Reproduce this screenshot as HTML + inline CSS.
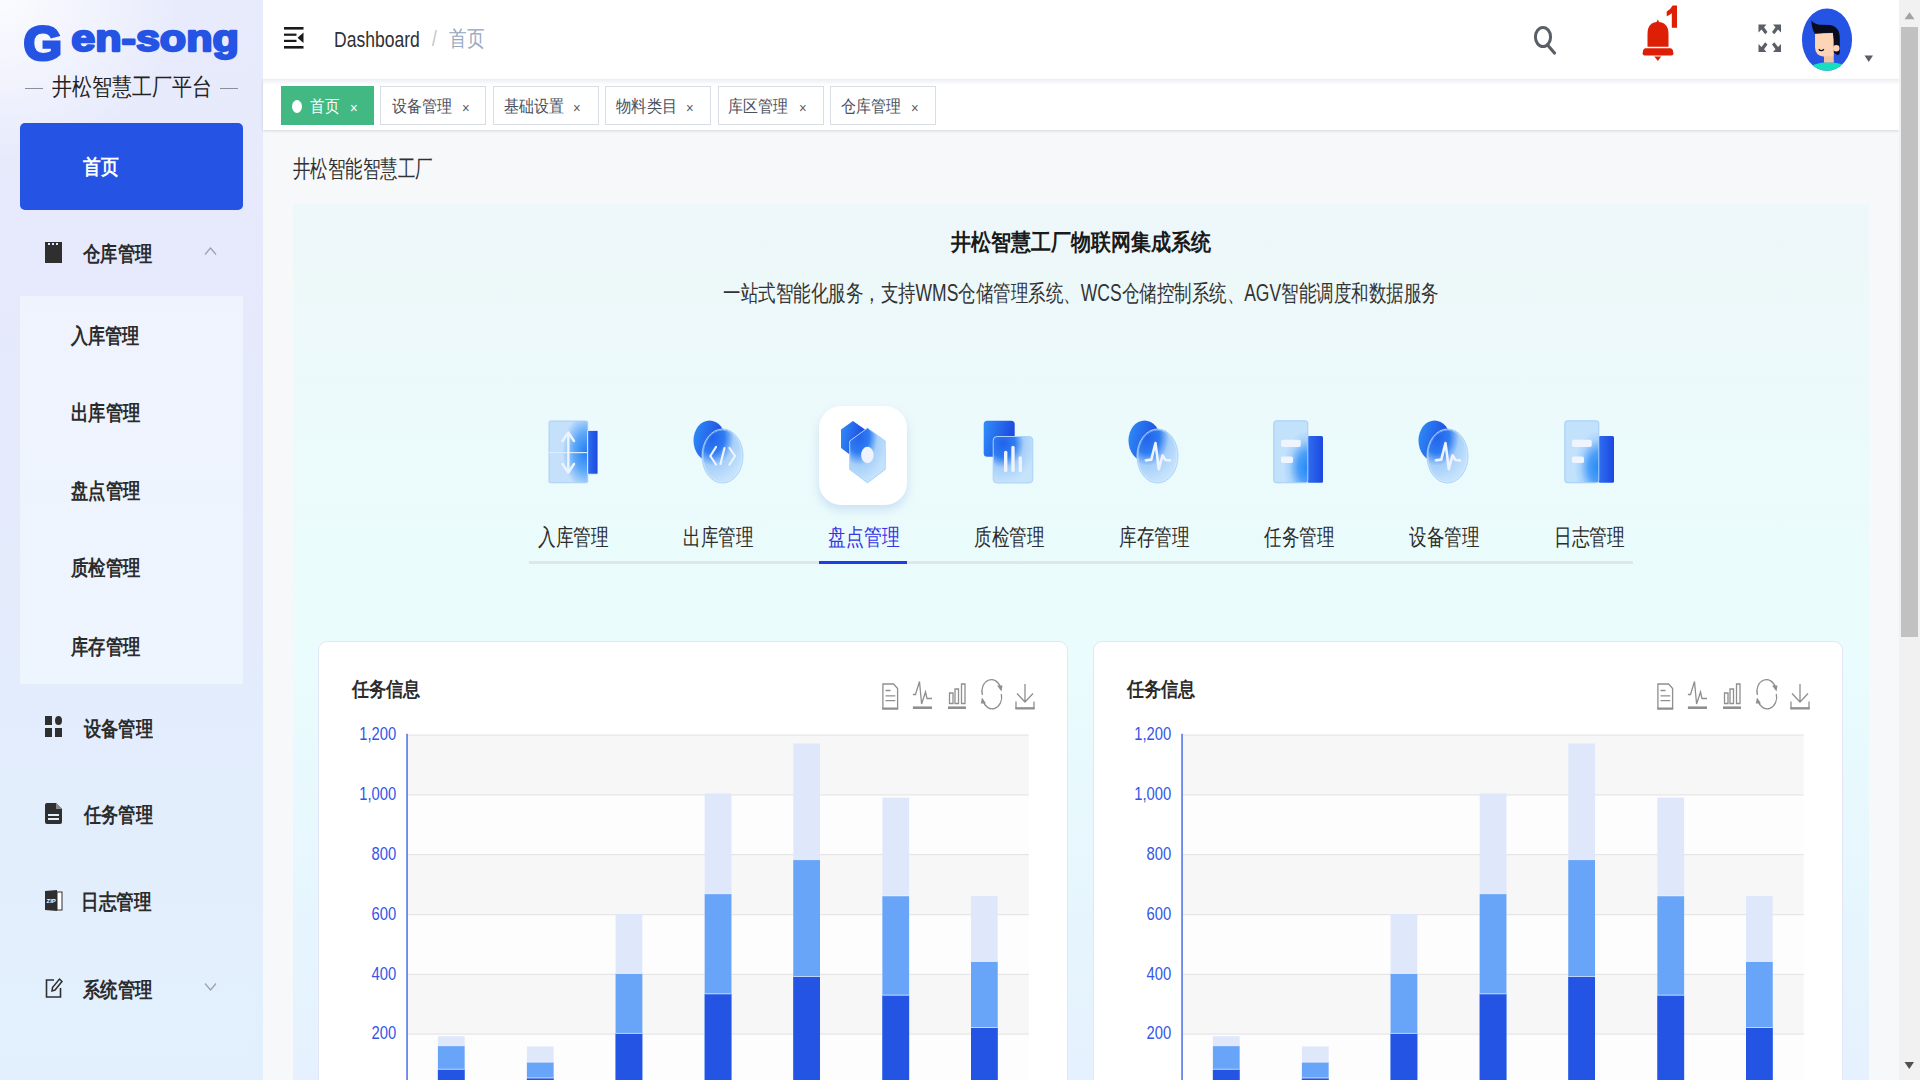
<!DOCTYPE html>
<html><head><meta charset="utf-8">
<style>
*{margin:0;padding:0;box-sizing:border-box}
html,body{width:1920px;height:1080px;overflow:hidden;background:#f7f8fa;font-family:"Liberation Sans",sans-serif;color:#303133}
.a{position:absolute}
.t{position:absolute;white-space:nowrap;transform-origin:0 0;line-height:1}
#side{left:0;top:0;width:263px;height:1080px;background:radial-gradient(ellipse 180px 160px at 0 0,rgba(255,255,255,.85),rgba(255,255,255,0)),linear-gradient(180deg,#e8ebfc 0%,#e5e9fb 30%,#e3ecfc 62%,#e2f0fd 100%)}
#sub{left:20px;top:296px;width:223px;height:388px;background:linear-gradient(180deg,#eff3fd,#edf5fe)}
.mi{font-size:22px;font-weight:bold;color:#2b2b2b}
.si{font-size:22px;font-weight:bold;color:#2b2b2b}
#hdr{left:263px;top:0;width:1636px;height:80px;background:#fff}
#tags{left:263px;top:80px;width:1636px;height:50px;background:#fff;box-shadow:0 1px 3px 0 rgba(0,0,0,.12),0 0 3px 0 rgba(0,0,0,.04)}
.tag{position:absolute;top:86px;height:39px;border:1px solid #d8dce5;background:#fff}
.tagt{font-size:18px;color:#495060}
.tagx{font-size:15.5px;color:#5a5e66}
#panel{left:293px;top:204px;width:1576px;height:876px;background:linear-gradient(180deg,#eef7f9 0%,#ebfbfc 35%,#eafcfd 52%,#e7f7fd 75%,#e5f1fe 100%)}
.card{position:absolute;top:640.8px;width:749.5px;height:460px;background:#fff;border:1px solid #e3e6f6;border-radius:9px}
.lbl{font-size:23px;color:#2a2a2a}
#sb{left:1899px;top:0;width:21px;height:1080px;background:#f1f1f1}
</style></head><body>

<!-- SIDEBAR -->
<div id="side" class="a">
  <svg class="a" style="left:0;top:0" width="263" height="110">
    <text x="23.5" y="60.3" font-family="Liberation Sans" font-weight="bold" font-size="48" fill="#2553e4" stroke="#2553e4" stroke-width="3" textLength="38.5" lengthAdjust="spacingAndGlyphs">G</text>
    <text x="71.3" y="51" font-family="Liberation Sans" font-weight="bold" font-size="37" fill="#2553e4" stroke="#2553e4" stroke-width="2.3" stroke-linejoin="round" textLength="167.5" lengthAdjust="spacingAndGlyphs">en-song</text>
    <rect x="25" y="88" width="18" height="1" fill="#8a8f9a"/>
    <rect x="220" y="88" width="18" height="1" fill="#8a8f9a"/>
  </svg>
  <div class="t" id="plat" style="left:52px;top:74.5px;font-size:24px;color:#222;transform:scaleX(0.834)">井松智慧工厂平台</div>

  <div class="a" style="left:20px;top:123px;width:223px;height:87px;background:#2553e4;border-radius:5px"></div>
  <div class="t mi" id="home" style="font-size:21px;left:83px;top:156.3px;color:#fff;transform:scaleX(0.846)">首页</div>

  <!-- 仓库管理 -->
  <svg class="a" style="left:45px;top:242px" width="18" height="22"><rect x="0" y="0" width="17" height="21" fill="#2f2f2f"/><rect x="3" y="1" width="2" height="2" fill="#e5e9fb"/><rect x="7" y="1" width="2" height="2" fill="#e5e9fb"/><rect x="11" y="1" width="2" height="2" fill="#e5e9fb"/></svg>
  <div class="t mi" id="m1" style="font-size:21px;left:83px;top:243px;transform:scaleX(0.822)">仓库管理</div>
  <svg class="a" style="left:204px;top:246px" width="14" height="10"><path d="M1 8.5 L6.5 2 L12 8.5" fill="none" stroke="#9aa0aa" stroke-width="1.2"/></svg>

  <div id="sub" class="a"></div>
  <div class="t si" id="s1" style="font-size:21px;left:71.4px;top:325.4px;transform:scaleX(0.817)">入库管理</div>
  <div class="t si" id="s2" style="font-size:21px;left:70.9px;top:401.8px;transform:scaleX(0.824)">出库管理</div>
  <div class="t si" id="s3" style="font-size:21px;left:70.7px;top:480px;transform:scaleX(0.823)">盘点管理</div>
  <div class="t si" id="s4" style="font-size:21px;left:70.6px;top:557.4px;transform:scaleX(0.826)">质检管理</div>
  <div class="t si" id="s5" style="font-size:21px;left:70.6px;top:635.6px;transform:scaleX(0.826)">库存管理</div>

  <!-- 设备管理 -->
  <svg class="a" style="left:45px;top:716px" width="18" height="22"><rect x="0" y="0" width="7" height="9" fill="#2f2f2f"/><ellipse cx="13.5" cy="4.5" rx="3.5" ry="4.5" fill="#2f2f2f"/><rect x="0" y="12" width="7" height="9" fill="#2f2f2f"/><rect x="10" y="12" width="7" height="9" fill="#2f2f2f"/></svg>
  <div class="t mi" id="m2" style="font-size:21px;left:83.6px;top:717.5px;transform:scaleX(0.821)">设备管理</div>

  <!-- 任务管理 -->
  <svg class="a" style="left:45px;top:803px" width="18" height="22"><path d="M0 2 Q0 0 2 0 L11 0 L17 6 L17 19 Q17 21 15 21 L2 21 Q0 21 0 19 Z" fill="#2f2f2f"/><rect x="3" y="11" width="11" height="2" fill="#e3eefc"/><rect x="3" y="15" width="11" height="2" fill="#e3eefc"/><path d="M11 0 L11 6 L17 6" fill="#8a8a8a"/></svg>
  <div class="t mi" id="m3" style="font-size:21px;left:83.6px;top:804px;transform:scaleX(0.821)">任务管理</div>

  <!-- 日志管理 -->
  <svg class="a" style="left:45px;top:890px" width="18" height="22"><path d="M0 1 L12 0 L12 21 L0 20 Z" fill="#2f2f2f"/><rect x="12" y="2" width="5" height="18" fill="#fff" stroke="#2f2f2f" stroke-width="1"/><text x="1.5" y="13" font-size="6" fill="#fff" font-family="Liberation Sans" font-weight="bold">ZIP</text></svg>
  <div class="t mi" id="m4" style="font-size:21px;left:81.4px;top:891.4px;transform:scaleX(0.836)">日志管理</div>

  <!-- 系统管理 -->
  <svg class="a" style="left:45px;top:977px" width="18" height="22"><path d="M9 3 L1.5 3 L1.5 20 L15.5 20 L15.5 11" fill="none" stroke="#2f2f2f" stroke-width="1.6"/><path d="M7 14 L7.5 10.5 L14.5 2 L17 4.5 L10 13 Z" fill="none" stroke="#2f2f2f" stroke-width="1.5"/></svg>
  <div class="t mi" id="m5" style="font-size:21px;left:83px;top:978.6px;transform:scaleX(0.828)">系统管理</div>
  <svg class="a" style="left:204px;top:982px" width="14" height="10"><path d="M1 1.5 L6.5 8 L12 1.5" fill="none" stroke="#9aa0aa" stroke-width="1.2"/></svg>
</div>

<!-- HEADER -->
<div id="hdr" class="a"></div>
<svg class="a" style="left:283px;top:26px" width="22" height="24"><rect x="1" y="1" width="19.5" height="2.6" fill="#1a1a1a"/><rect x="1" y="7.6" width="12.5" height="2.2" fill="#1a1a1a"/><rect x="1" y="13.8" width="12.5" height="2.2" fill="#1a1a1a"/><path d="M20.5 6.5 L14.5 11.8 L20.5 17 Z" fill="#1a1a1a"/><rect x="1" y="20" width="19.5" height="2.6" fill="#1a1a1a"/></svg>
<div class="t" id="bc1" style="left:334.2px;top:29px;font-size:22px;color:#303133;transform:scaleX(0.797)">Dashboard</div>
<div class="t" id="bc2" style="left:431.7px;top:28px;font-size:22px;color:#c0c4cc;transform:scaleX(.78)">/</div>
<div class="t" id="bc3" style="left:448.8px;top:28.2px;font-size:22px;color:#97a8be;transform:scaleX(0.803)">首页</div>
<svg class="a" style="left:1530px;top:22px" width="30" height="34"><ellipse cx="13" cy="15" rx="7.6" ry="9.6" fill="none" stroke="#5a5e66" stroke-width="3"/><path d="M17.5 23 L24.5 31" stroke="#5a5e66" stroke-width="3.2" stroke-linecap="round"/></svg>
<svg class="a" style="left:1640px;top:0px" width="42" height="64"><g fill="#dd1f05"><path d="M17.8 19.5 L19.6 23 L16 23 Z"/><path d="M7.5 46.8 L7.5 34 Q7.5 22.3 17.8 22 Q28.5 22.3 28.5 34 L28.5 46.8 Z"/><path d="M5.5 48.2 L30.5 48.2 Q32 48.2 32.8 50 L33.4 53.5 Q33.4 55.6 31.4 55.6 L4.6 55.6 Q2.6 55.6 2.6 53.5 L3.2 50 Q4 48.2 5.5 48.2 Z"/><path d="M14.4 56.6 L21.2 56.6 L17.8 61 Z"/></g><path d="M37 5.6 L37 27.7 L31.8 27.7 L31.8 13.2 Q29.3 15.4 26.7 16.3 L26.7 11.6 Q30.5 9.9 32.6 5.6 Z" fill="#dd1f05"/></svg>
<svg class="a" style="left:1757px;top:23px" width="26" height="31"><g fill="#5a5e66"><path d="M1.5 1.5 L9.5 1.5 L7 4.2 L10.5 9 L8.2 11.3 L4.5 6.6 L1.5 9.5 Z"/><path d="M24 1.5 L16 1.5 L18.5 4.2 L15 9 L17.3 11.3 L21 6.6 L24 9.5 Z"/><path d="M1.5 29 L9.5 29 L7 26.3 L10.5 21.5 L8.2 19.2 L4.5 23.9 L1.5 21 Z"/><path d="M24 29 L16 29 L18.5 26.3 L15 21.5 L17.3 19.2 L21 23.9 L24 21 Z"/></g></svg>
<svg class="a" style="left:1800px;top:7px" width="55" height="66">
 <defs><clipPath id="avc"><ellipse cx="27" cy="32.6" rx="25.05" ry="31.2"/></clipPath></defs>
 <ellipse cx="27" cy="32.6" rx="25.05" ry="31.2" fill="#2553e4"/>
 <g clip-path="url(#avc)">
  <path d="M6 64 Q12 55.5 27 55.2 Q41 55.2 47 60 L47 75 L6 75 Z" fill="#16dfbd"/>
  <rect x="24" y="46" width="9.75" height="9.5" fill="#f5c1a5"/>
  <path d="M15 26.5 L33.5 26 L34 45 L33 49.25 L23 49.5 Q15.2 48.5 15 40 Z" fill="#fdd5b6"/>
  <path d="M11.25 13.6 Q14 17 19.7 17.8 L30 18.1 Q36 19 38.6 24 Q40 28 39.8 32 L39.8 45.5 Q39.5 48.2 37.2 48 L33.75 45.5 L33.75 32.4 L32.8 25.8 Q24 26 15 26.75 Q12.2 24 11.25 13.6 Z" fill="#080c1c"/>
  <circle cx="36.3" cy="41.3" r="3.2" fill="#fdd5b6"/>
  <path d="M18.8 42.2 Q21.3 45 23.9 42.2" fill="none" stroke="#080c1c" stroke-width="1.4"/>
 </g>
</svg>
<svg class="a" style="left:1863px;top:54px" width="12" height="10"><path d="M1.5 1.5 L10 1.5 L5.75 8 Z" fill="#5a5e66"/></svg>

<div id="tags" class="a"></div>
<div class="a" style="left:263px;top:79px;width:1636px;height:6px;background:linear-gradient(180deg,#eceef2,rgba(255,255,255,0))"></div>
<div class="a" style="left:281px;top:86px;width:93px;height:39px;background:#42b983"></div>
<div class="a" style="left:292px;top:100px;width:10px;height:13px;border-radius:50%;background:#fff"></div>
<div class="t tagt" id="tg1" style="font-size:17px;left:309.5px;top:98px;color:#fff;transform:scaleX(0.853)">首页</div>
<div class="t tagx" id="tx1" style="font-size:15.5px;left:350.1px;top:99.6px;color:#fff;transform:scaleX(0.843)">×</div>
<div class="tag" style="left:380.3px;width:106px"></div>
<div class="t tagt" id="tg2" style="font-size:17px;left:391.6px;top:97.5px;transform:scaleX(0.884)">设备管理</div>
<div class="t tagx" id="tx2" style="font-size:15.5px;left:461.9px;top:99.6px;transform:scaleX(0.843)">×</div>
<div class="tag" style="left:493.0px;width:106px"></div>
<div class="t tagt" id="tg3" style="font-size:17px;left:503.9px;top:97.5px;transform:scaleX(0.881)">基础设置</div>
<div class="t tagx" id="tx3" style="font-size:15.5px;left:572.7px;top:99.6px;transform:scaleX(0.843)">×</div>
<div class="tag" style="left:605.4px;width:106px"></div>
<div class="t tagt" id="tg4" style="font-size:17px;left:615.9px;top:98.2px;transform:scaleX(0.901)">物料类目</div>
<div class="t tagx" id="tx4" style="font-size:15.5px;left:686px;top:99.6px;transform:scaleX(0.843)">×</div>
<div class="tag" style="left:718.4px;width:106px"></div>
<div class="t tagt" id="tg5" style="font-size:17px;left:728.4px;top:98.2px;transform:scaleX(0.878)">库区管理</div>
<div class="t tagx" id="tx5" style="font-size:15.5px;left:798.9px;top:99.6px;transform:scaleX(0.843)">×</div>
<div class="tag" style="left:830.4px;width:106px"></div>
<div class="t tagt" id="tg6" style="font-size:17px;left:840.9px;top:98.2px;transform:scaleX(0.878)">仓库管理</div>
<div class="t tagx" id="tx6" style="font-size:15.5px;left:911px;top:99.6px;transform:scaleX(0.843)">×</div>

<div class="t" id="hd" style="left:293px;top:156.6px;font-size:24px;color:#303133;transform:scaleX(0.728)">井松智能智慧工厂</div>
<div id="panel" class="a"></div>
<svg width="0" height="0" style="position:absolute">
 <defs>
  <linearGradient id="gDark" x1="0" y1="0" x2="1" y2="0.3"><stop offset="0" stop-color="#2f8ff9"/><stop offset="1" stop-color="#1e48df"/></linearGradient>
  <linearGradient id="gDark2" x1="0" y1="0" x2="1" y2="0"><stop offset="0" stop-color="#2d6ff0"/><stop offset="1" stop-color="#1d47df"/></linearGradient>
  <radialGradient id="gGlass" cx="0.25" cy="0.15" r="0.85"><stop offset="0" stop-color="#2263ea"/><stop offset="0.35" stop-color="#2f7cf2"/><stop offset="0.62" stop-color="#a6cff9"/><stop offset="1" stop-color="#c6e3fc"/></radialGradient>
  <radialGradient id="gPanelA" cx="0.95" cy="0.5" r="0.6"><stop offset="0" stop-color="#2480f5"/><stop offset="0.5" stop-color="#5aa6f8"/><stop offset="1" stop-color="#c4e0fb"/></radialGradient>
  <radialGradient id="gPanelF" cx="1" cy="0.75" r="0.85" gradientTransform="translate(1,0.75) scale(0.85,0.7) translate(-1,-0.75)"><stop offset="0" stop-color="#2388f7"/><stop offset="0.4" stop-color="#4c9ff8"/><stop offset="0.75" stop-color="#a9d2fb"/><stop offset="1" stop-color="#c2e2fc"/></radialGradient>
 </defs>
</svg>
<div class="t" id="ttl" style="left:951px;top:231px;font-size:23px;font-weight:bold;color:#1a1a1a;transform:scaleX(0.869)">井松智慧工厂物联网集成系统</div>
<div class="t" id="sub1" style="left:723.1px;top:282px;font-size:23px;color:#333;transform:scaleX(0.761)">一站式智能化服务，支持WMS仓储管理系统、WCS仓储控制系统、AGV智能调度和数据服务</div>
<div class="a" style="left:819px;top:406px;width:88px;height:99px;background:#fff;border-radius:22px;box-shadow:0 5px 10px rgba(120,160,220,.28)"></div>
<svg class="a" style="left:528px;top:400px" width="90" height="90"><rect x="21" y="21" width="38.7" height="61.75" rx="1.5" fill="url(#gPanelA)" stroke="#9fcaf7" stroke-width="0.8"/>
<rect x="59.7" y="30.4" width="10.3" height="43.8" rx="1" fill="url(#gDark2)" stroke="#fff" stroke-width="0.8"/>
<rect x="21" y="52" width="38.7" height="1.2" fill="#d9ebfd"/>
<g fill="none" stroke="#eef4fe" stroke-width="2.4" stroke-linecap="round" stroke-linejoin="round"><path d="M40.3 33 L40.3 72"/><path d="M34.5 41 L40.3 32.5 L46 41"/><path d="M34.5 64 L40.3 72.5 L46 64"/></g></svg>
<svg class="a" style="left:673px;top:400px" width="90" height="90"><ellipse cx="36.5" cy="40.6" rx="16" ry="20.2" fill="url(#gDark)"/>
<ellipse cx="49.5" cy="56" rx="20.5" ry="27" fill="url(#gGlass)" stroke="#a9d3fa" stroke-width="1"/>
<ellipse cx="49.5" cy="56" rx="19.5" ry="26" fill="none" stroke="#e8f3fe" stroke-opacity=".5" stroke-width="0.8"/><g fill="none" stroke="#eef4fe" stroke-width="2.2" stroke-linecap="round" stroke-linejoin="round"><path d="M43 47 L37.3 56 L43 64.5"/><path d="M51.5 48 L47.5 64"/><path d="M56.5 48 L62 56 L56.5 64.5"/></g></svg>
<svg class="a" style="left:818px;top:400px" width="90" height="90"><path d="M35 21 L47 29.5 L47 48 L35 57 L23 48 L23 29.5 Z" fill="url(#gDark)"/>
<path d="M49.5 28 L67.2 41 L67.2 69.5 L49.5 82.8 L31.7 69.5 L31.7 41 Z" fill="url(#gGlass)" stroke="#a9d3fa" stroke-width="1"/>
<ellipse cx="49.4" cy="55" rx="6.3" ry="8.3" fill="#eef3fd"/></svg>
<svg class="a" style="left:963px;top:400px" width="90" height="90"><rect x="20.7" y="20.8" width="31" height="35.9" rx="3.5" fill="url(#gDark)"/>
<rect x="30.2" y="36.5" width="39.6" height="46.5" rx="3.8" fill="url(#gGlass)" stroke="#a9d3fa" stroke-width="1"/>
<g stroke="#eef4fe" stroke-width="3.4" stroke-linecap="round"><path d="M42.7 52.5 L42.7 70.5"/><path d="M50 47.5 L50 70.5"/><path d="M57.3 58 L57.3 70.5"/></g></svg>
<svg class="a" style="left:1108px;top:400px" width="90" height="90"><ellipse cx="36.5" cy="40.6" rx="16" ry="20.2" fill="url(#gDark)"/>
<ellipse cx="49.5" cy="56" rx="20.5" ry="27" fill="url(#gGlass)" stroke="#a9d3fa" stroke-width="1"/>
<ellipse cx="49.5" cy="56" rx="19.5" ry="26" fill="none" stroke="#e8f3fe" stroke-opacity=".5" stroke-width="0.8"/><path d="M37.9 60.4 L43.3 59.6 L47.5 43 L50.8 69.2 L54.6 55.4 L57.5 60 L62 60.4" fill="none" stroke="#eef4fe" stroke-width="2.6" stroke-linecap="round" stroke-linejoin="round"/></svg>
<svg class="a" style="left:1253px;top:400px" width="90" height="90"><rect x="54.6" y="36" width="15.4" height="46.75" rx="1.5" fill="url(#gDark2)"/>
<rect x="20.8" y="20.8" width="34" height="61.95" rx="2.5" fill="url(#gPanelF)" stroke="#a3cdf8" stroke-width="1"/>
<rect x="28" y="39.8" width="19.7" height="7.2" rx="1.8" fill="#eef5fe"/>
<rect x="28" y="56.5" width="12" height="6.5" rx="1.8" fill="#eef5fe"/></svg>
<svg class="a" style="left:1398px;top:400px" width="90" height="90"><ellipse cx="36.5" cy="40.6" rx="16" ry="20.2" fill="url(#gDark)"/>
<ellipse cx="49.5" cy="56" rx="20.5" ry="27" fill="url(#gGlass)" stroke="#a9d3fa" stroke-width="1"/>
<ellipse cx="49.5" cy="56" rx="19.5" ry="26" fill="none" stroke="#e8f3fe" stroke-opacity=".5" stroke-width="0.8"/><path d="M37.9 60.4 L43.3 59.6 L47.5 43 L50.8 69.2 L54.6 55.4 L57.5 60 L62 60.4" fill="none" stroke="#eef4fe" stroke-width="2.6" stroke-linecap="round" stroke-linejoin="round"/></svg>
<svg class="a" style="left:1543.5px;top:400px" width="90" height="90"><rect x="54.6" y="36" width="15.4" height="46.75" rx="1.5" fill="url(#gDark2)"/>
<rect x="20.8" y="20.8" width="34" height="61.95" rx="2.5" fill="url(#gPanelF)" stroke="#a3cdf8" stroke-width="1"/>
<rect x="28" y="39.8" width="19.7" height="7.2" rx="1.8" fill="#eef5fe"/>
<rect x="28" y="56.5" width="12" height="6.5" rx="1.8" fill="#eef5fe"/></svg>
<div class="t lbl" id="lb1" style="font-size:23px;left:538px;top:525.8px;color:#2c2c2c;transform:scaleX(0.769)">入库管理</div>
<div class="t lbl" id="lb2" style="font-size:23px;left:683px;top:526px;color:#2c2c2c;transform:scaleX(0.764)">出库管理</div>
<div class="t lbl" id="lb3" style="font-size:23px;left:827.7px;top:526px;color:#3535e6;transform:scaleX(0.776)">盘点管理</div>
<div class="t lbl" id="lb4" style="font-size:23px;left:973.5px;top:526px;color:#2c2c2c;transform:scaleX(0.762)">质检管理</div>
<div class="t lbl" id="lb5" style="font-size:23px;left:1118.9px;top:526px;color:#2c2c2c;transform:scaleX(0.765)">库存管理</div>
<div class="t lbl" id="lb6" style="font-size:23px;left:1263.5px;top:526px;color:#2c2c2c;transform:scaleX(0.762)">任务管理</div>
<div class="t lbl" id="lb7" style="font-size:23px;left:1408.7px;top:526px;color:#2c2c2c;transform:scaleX(0.762)">设备管理</div>
<div class="t lbl" id="lb8" style="font-size:23px;left:1554.1px;top:526.2px;color:#2c2c2c;transform:scaleX(0.769)">日志管理</div>
<div class="a" style="left:529px;top:561px;width:1104px;height:3px;background:#e3e5e6"></div>
<div class="a" style="left:819px;top:561px;width:88px;height:3px;background:#1d3ee6"></div>
<div class="card" style="left:318.3px"></div>
<div class="t" id="ct0" style="left:352.1px;top:679.4px;font-size:20px;font-weight:bold;color:#2b2b2b;transform:scaleX(0.858)">任务信息</div>
<svg class="a" style="left:340px;top:670px" width="700" height="410"><rect x="68" y="65.0" width="620.7" height="59.8" fill="#f7f7f7"/><rect x="68" y="124.8" width="620.7" height="59.7" fill="#fdfdfd"/><rect x="68" y="184.5" width="620.7" height="60.0" fill="#f7f7f7"/><rect x="68" y="244.5" width="620.7" height="59.8" fill="#fdfdfd"/><rect x="68" y="304.3" width="620.7" height="59.7" fill="#f7f7f7"/><rect x="68" y="364.0" width="620.7" height="59.8" fill="#fdfdfd"/><rect x="68" y="64.5" width="620.7" height="1.2" fill="#e6e6e6"/><rect x="68" y="124.3" width="620.7" height="1.2" fill="#e6e6e6"/><rect x="68" y="184.0" width="620.7" height="1.2" fill="#e6e6e6"/><rect x="68" y="244.0" width="620.7" height="1.2" fill="#e6e6e6"/><rect x="68" y="303.8" width="620.7" height="1.2" fill="#e6e6e6"/><rect x="68" y="363.5" width="620.7" height="1.2" fill="#e6e6e6"/><rect x="97.9" y="366.25" width="26.7" height="63.8" fill="#dfe7fb"/><rect x="97.9" y="375.90" width="26.7" height="54.1" fill="#68a4f8"/><rect x="97.9" y="399.40" width="26.7" height="30.6" fill="#2454e3"/><rect x="97.9" y="375.30" width="26.7" height="0.9" fill="#eef4fe" fill-opacity=".8"/><rect x="97.9" y="398.80" width="26.7" height="0.9" fill="#eef4fe" fill-opacity=".8"/><rect x="186.9" y="376.50" width="26.7" height="53.5" fill="#dfe7fb"/><rect x="186.9" y="392.25" width="26.7" height="37.8" fill="#68a4f8"/><rect x="186.9" y="408.10" width="26.7" height="21.9" fill="#2454e3"/><rect x="186.9" y="391.65" width="26.7" height="0.9" fill="#eef4fe" fill-opacity=".8"/><rect x="186.9" y="407.50" width="26.7" height="0.9" fill="#eef4fe" fill-opacity=".8"/><rect x="275.6" y="244.00" width="26.7" height="186.0" fill="#dfe7fb"/><rect x="275.6" y="303.60" width="26.7" height="126.4" fill="#68a4f8"/><rect x="275.6" y="363.50" width="26.7" height="66.5" fill="#2454e3"/><rect x="275.6" y="303.00" width="26.7" height="0.9" fill="#eef4fe" fill-opacity=".8"/><rect x="275.6" y="362.90" width="26.7" height="0.9" fill="#eef4fe" fill-opacity=".8"/><rect x="364.7" y="123.40" width="26.7" height="306.6" fill="#dfe7fb"/><rect x="364.7" y="223.90" width="26.7" height="206.1" fill="#68a4f8"/><rect x="364.7" y="324.00" width="26.7" height="106.0" fill="#2454e3"/><rect x="364.7" y="223.30" width="26.7" height="0.9" fill="#eef4fe" fill-opacity=".8"/><rect x="364.7" y="323.40" width="26.7" height="0.9" fill="#eef4fe" fill-opacity=".8"/><rect x="453.3" y="73.50" width="26.7" height="356.5" fill="#dfe7fb"/><rect x="453.3" y="189.80" width="26.7" height="240.2" fill="#68a4f8"/><rect x="453.3" y="306.60" width="26.7" height="123.4" fill="#2454e3"/><rect x="453.3" y="189.20" width="26.7" height="0.9" fill="#eef4fe" fill-opacity=".8"/><rect x="453.3" y="306.00" width="26.7" height="0.9" fill="#eef4fe" fill-opacity=".8"/><rect x="542.4" y="127.60" width="26.7" height="302.4" fill="#dfe7fb"/><rect x="542.4" y="226.00" width="26.7" height="204.0" fill="#68a4f8"/><rect x="542.4" y="325.30" width="26.7" height="104.7" fill="#2454e3"/><rect x="542.4" y="225.40" width="26.7" height="0.9" fill="#eef4fe" fill-opacity=".8"/><rect x="542.4" y="324.70" width="26.7" height="0.9" fill="#eef4fe" fill-opacity=".8"/><rect x="631.0" y="226.00" width="26.7" height="204.0" fill="#dfe7fb"/><rect x="631.0" y="291.60" width="26.7" height="138.4" fill="#68a4f8"/><rect x="631.0" y="357.70" width="26.7" height="72.3" fill="#2454e3"/><rect x="631.0" y="291.00" width="26.7" height="0.9" fill="#eef4fe" fill-opacity=".8"/><rect x="631.0" y="357.10" width="26.7" height="0.9" fill="#eef4fe" fill-opacity=".8"/><rect x="66.3" y="63.8" width="1.5" height="400" fill="#4a6ee6"/><text x="56.3" y="70.3" text-anchor="end" font-family="Liberation Sans" font-size="18.5" fill="#3456e6" transform="translate(56.3,0) scale(.8,1) translate(-56.3,0)">1,200</text><text x="56.3" y="130.1" text-anchor="end" font-family="Liberation Sans" font-size="18.5" fill="#3456e6" transform="translate(56.3,0) scale(.8,1) translate(-56.3,0)">1,000</text><text x="56.3" y="189.8" text-anchor="end" font-family="Liberation Sans" font-size="18.5" fill="#3456e6" transform="translate(56.3,0) scale(.8,1) translate(-56.3,0)">800</text><text x="56.3" y="249.8" text-anchor="end" font-family="Liberation Sans" font-size="18.5" fill="#3456e6" transform="translate(56.3,0) scale(.8,1) translate(-56.3,0)">600</text><text x="56.3" y="309.6" text-anchor="end" font-family="Liberation Sans" font-size="18.5" fill="#3456e6" transform="translate(56.3,0) scale(.8,1) translate(-56.3,0)">400</text><text x="56.3" y="369.3" text-anchor="end" font-family="Liberation Sans" font-size="18.5" fill="#3456e6" transform="translate(56.3,0) scale(.8,1) translate(-56.3,0)">200</text><g transform="translate(0,45)"><g fill="none" stroke="#8f8f8f" stroke-width="1.3"><path d="M542.9 -31 L553.6 -31 L557.6 -26.5 L557.6 -6.3 L542.9 -6.3 Z"/><path d="M545.5 -24.5 L550.5 -24.5 M545.5 -19.2 L555.3 -19.2 M545.5 -14.4 L555.3 -14.4"/><path d="M572.9 -20.5 L575.5 -20.5 L579.5 -33.5 L581.6 -11 L585.5 -23 L587 -16.5 L592 -16.5"/><path d="M609.5 -22 L613 -22 L613 -11.5 L609.5 -11.5 Z M615 -26 L618.5 -26 L618.5 -11.5 L615 -11.5 Z M621.5 -31 L625 -31 L625 -11.5 L621.5 -11.5 Z"/><path d="M660.5 -27.5 A 9.3 11.3 0 0 0 642.4 -20 M643 -14.5 A 9.3 11.3 0 0 0 661.3 -21"/><path d="M685 -31 L685 -13 M677 -21.5 L685 -13 L693 -21.5 M676 -13.5 L676 -6.6 L694 -6.6 L694 -13.5"/></g><g fill="#8f8f8f"><rect x="542.3" y="-7.5" width="15.9" height="2.2"/><rect x="572.9" y="-8.6" width="19.1" height="2.6"/><rect x="608" y="-8.6" width="18" height="2.6"/><rect x="675.4" y="-7.8" width="19.2" height="2.3"/><path d="M657 -29.5 L662.5 -29.5 L661.5 -23.5 Z"/><path d="M646 -11.5 L640.8 -11.5 L642 -17.5 Z"/></g></g></svg>
<div class="card" style="left:1093.3px"></div>
<div class="t" id="ct775" style="left:1126.9px;top:679.4px;font-size:20px;font-weight:bold;color:#2b2b2b;transform:scaleX(0.858)">任务信息</div>
<svg class="a" style="left:1115px;top:670px" width="700" height="410"><rect x="68" y="65.0" width="620.7" height="59.8" fill="#f7f7f7"/><rect x="68" y="124.8" width="620.7" height="59.7" fill="#fdfdfd"/><rect x="68" y="184.5" width="620.7" height="60.0" fill="#f7f7f7"/><rect x="68" y="244.5" width="620.7" height="59.8" fill="#fdfdfd"/><rect x="68" y="304.3" width="620.7" height="59.7" fill="#f7f7f7"/><rect x="68" y="364.0" width="620.7" height="59.8" fill="#fdfdfd"/><rect x="68" y="64.5" width="620.7" height="1.2" fill="#e6e6e6"/><rect x="68" y="124.3" width="620.7" height="1.2" fill="#e6e6e6"/><rect x="68" y="184.0" width="620.7" height="1.2" fill="#e6e6e6"/><rect x="68" y="244.0" width="620.7" height="1.2" fill="#e6e6e6"/><rect x="68" y="303.8" width="620.7" height="1.2" fill="#e6e6e6"/><rect x="68" y="363.5" width="620.7" height="1.2" fill="#e6e6e6"/><rect x="97.9" y="366.25" width="26.7" height="63.8" fill="#dfe7fb"/><rect x="97.9" y="375.90" width="26.7" height="54.1" fill="#68a4f8"/><rect x="97.9" y="399.40" width="26.7" height="30.6" fill="#2454e3"/><rect x="97.9" y="375.30" width="26.7" height="0.9" fill="#eef4fe" fill-opacity=".8"/><rect x="97.9" y="398.80" width="26.7" height="0.9" fill="#eef4fe" fill-opacity=".8"/><rect x="186.9" y="376.50" width="26.7" height="53.5" fill="#dfe7fb"/><rect x="186.9" y="392.25" width="26.7" height="37.8" fill="#68a4f8"/><rect x="186.9" y="408.10" width="26.7" height="21.9" fill="#2454e3"/><rect x="186.9" y="391.65" width="26.7" height="0.9" fill="#eef4fe" fill-opacity=".8"/><rect x="186.9" y="407.50" width="26.7" height="0.9" fill="#eef4fe" fill-opacity=".8"/><rect x="275.6" y="244.00" width="26.7" height="186.0" fill="#dfe7fb"/><rect x="275.6" y="303.60" width="26.7" height="126.4" fill="#68a4f8"/><rect x="275.6" y="363.50" width="26.7" height="66.5" fill="#2454e3"/><rect x="275.6" y="303.00" width="26.7" height="0.9" fill="#eef4fe" fill-opacity=".8"/><rect x="275.6" y="362.90" width="26.7" height="0.9" fill="#eef4fe" fill-opacity=".8"/><rect x="364.7" y="123.40" width="26.7" height="306.6" fill="#dfe7fb"/><rect x="364.7" y="223.90" width="26.7" height="206.1" fill="#68a4f8"/><rect x="364.7" y="324.00" width="26.7" height="106.0" fill="#2454e3"/><rect x="364.7" y="223.30" width="26.7" height="0.9" fill="#eef4fe" fill-opacity=".8"/><rect x="364.7" y="323.40" width="26.7" height="0.9" fill="#eef4fe" fill-opacity=".8"/><rect x="453.3" y="73.50" width="26.7" height="356.5" fill="#dfe7fb"/><rect x="453.3" y="189.80" width="26.7" height="240.2" fill="#68a4f8"/><rect x="453.3" y="306.60" width="26.7" height="123.4" fill="#2454e3"/><rect x="453.3" y="189.20" width="26.7" height="0.9" fill="#eef4fe" fill-opacity=".8"/><rect x="453.3" y="306.00" width="26.7" height="0.9" fill="#eef4fe" fill-opacity=".8"/><rect x="542.4" y="127.60" width="26.7" height="302.4" fill="#dfe7fb"/><rect x="542.4" y="226.00" width="26.7" height="204.0" fill="#68a4f8"/><rect x="542.4" y="325.30" width="26.7" height="104.7" fill="#2454e3"/><rect x="542.4" y="225.40" width="26.7" height="0.9" fill="#eef4fe" fill-opacity=".8"/><rect x="542.4" y="324.70" width="26.7" height="0.9" fill="#eef4fe" fill-opacity=".8"/><rect x="631.0" y="226.00" width="26.7" height="204.0" fill="#dfe7fb"/><rect x="631.0" y="291.60" width="26.7" height="138.4" fill="#68a4f8"/><rect x="631.0" y="357.70" width="26.7" height="72.3" fill="#2454e3"/><rect x="631.0" y="291.00" width="26.7" height="0.9" fill="#eef4fe" fill-opacity=".8"/><rect x="631.0" y="357.10" width="26.7" height="0.9" fill="#eef4fe" fill-opacity=".8"/><rect x="66.3" y="63.8" width="1.5" height="400" fill="#4a6ee6"/><text x="56.3" y="70.3" text-anchor="end" font-family="Liberation Sans" font-size="18.5" fill="#3456e6" transform="translate(56.3,0) scale(.8,1) translate(-56.3,0)">1,200</text><text x="56.3" y="130.1" text-anchor="end" font-family="Liberation Sans" font-size="18.5" fill="#3456e6" transform="translate(56.3,0) scale(.8,1) translate(-56.3,0)">1,000</text><text x="56.3" y="189.8" text-anchor="end" font-family="Liberation Sans" font-size="18.5" fill="#3456e6" transform="translate(56.3,0) scale(.8,1) translate(-56.3,0)">800</text><text x="56.3" y="249.8" text-anchor="end" font-family="Liberation Sans" font-size="18.5" fill="#3456e6" transform="translate(56.3,0) scale(.8,1) translate(-56.3,0)">600</text><text x="56.3" y="309.6" text-anchor="end" font-family="Liberation Sans" font-size="18.5" fill="#3456e6" transform="translate(56.3,0) scale(.8,1) translate(-56.3,0)">400</text><text x="56.3" y="369.3" text-anchor="end" font-family="Liberation Sans" font-size="18.5" fill="#3456e6" transform="translate(56.3,0) scale(.8,1) translate(-56.3,0)">200</text><g transform="translate(0,45)"><g fill="none" stroke="#8f8f8f" stroke-width="1.3"><path d="M542.9 -31 L553.6 -31 L557.6 -26.5 L557.6 -6.3 L542.9 -6.3 Z"/><path d="M545.5 -24.5 L550.5 -24.5 M545.5 -19.2 L555.3 -19.2 M545.5 -14.4 L555.3 -14.4"/><path d="M572.9 -20.5 L575.5 -20.5 L579.5 -33.5 L581.6 -11 L585.5 -23 L587 -16.5 L592 -16.5"/><path d="M609.5 -22 L613 -22 L613 -11.5 L609.5 -11.5 Z M615 -26 L618.5 -26 L618.5 -11.5 L615 -11.5 Z M621.5 -31 L625 -31 L625 -11.5 L621.5 -11.5 Z"/><path d="M660.5 -27.5 A 9.3 11.3 0 0 0 642.4 -20 M643 -14.5 A 9.3 11.3 0 0 0 661.3 -21"/><path d="M685 -31 L685 -13 M677 -21.5 L685 -13 L693 -21.5 M676 -13.5 L676 -6.6 L694 -6.6 L694 -13.5"/></g><g fill="#8f8f8f"><rect x="542.3" y="-7.5" width="15.9" height="2.2"/><rect x="572.9" y="-8.6" width="19.1" height="2.6"/><rect x="608" y="-8.6" width="18" height="2.6"/><rect x="675.4" y="-7.8" width="19.2" height="2.3"/><path d="M657 -29.5 L662.5 -29.5 L661.5 -23.5 Z"/><path d="M646 -11.5 L640.8 -11.5 L642 -17.5 Z"/></g></g></svg>
<div id="sb" class="a"></div>
<div class="a" style="left:1901px;top:27px;width:17px;height:610px;background:#c1c1c1"></div>
<svg class="a" style="left:1899px;top:0" width="21" height="1080"><path d="M5.5 19.3 L10.5 12.2 L15.5 19.3 Z" fill="#a3a3a3"/><path d="M5.5 1062 L15 1062 L10.25 1069 Z" fill="#505050"/></svg>

</body></html>
